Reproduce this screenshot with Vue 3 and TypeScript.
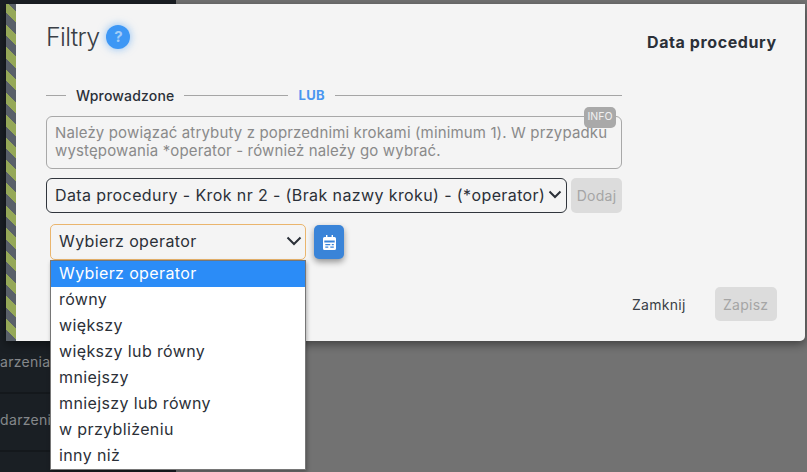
<script setup lang="ts">
const operators = [
  'Wybierz operator',
  'równy',
  'większy',
  'większy lub równy',
  'mniejszy',
  'mniejszy lub równy',
  'w przybliżeniu',
  'inny niż',
]
</script>

<template>
  <div class="page">
    <aside class="sidebar">
      <div class="side-row">Zdarzenia</div>
      <div class="side-row">Zdarzenia</div>
    </aside>
    <div class="backdrop" />

    <div class="modal">
      <div class="stripe" />
      <div class="modal-body">
        <div class="columns">
          <section class="main-col">
            <header class="title-row">
              <h1 class="title">Filtry</h1>
              <span class="help">?</span>
            </header>

            <div class="tabs">
              <span class="line short" />
              <span class="tab">Wprowadzone</span>
              <span class="line mid" />
              <span class="tab active">LUB</span>
              <span class="line" />
            </div>

            <div class="info-box">
              <span class="badge">INFO</span>
              Należy powiązać atrybuty z poprzednimi krokami (minimum 1). W przypadku<br />
              występowania *operator - również należy go wybrać.
            </div>

            <div class="attr-row">
              <div class="attr-select">
                <span>Data procedury - Krok nr 2 - (Brak nazwy kroku) - (*operator)</span>
                <svg class="chevron" width="14" height="9" viewBox="0 0 14 9" fill="none" aria-hidden="true">
                  <path d="M1.5 1.5L7 7l5.5-5.5" stroke="#2b3038" stroke-width="2" />
                </svg>
              </div>
              <button class="btn-disabled add">Dodaj</button>
            </div>

            <div class="operator-row">
              <div class="operator-wrap">
                <div class="operator-select">
                  <span>Wybierz operator</span>
                  <svg class="chevron" width="16" height="10" viewBox="0 0 16 10" fill="none" aria-hidden="true">
                    <path d="M1.5 1.5L8 8l6.5-6.5" stroke="#2b3038" stroke-width="2" />
                  </svg>
                </div>
                <ul class="options">
                  <li
                    v-for="(op, i) in operators"
                    :key="op"
                    class="option"
                    :class="{ selected: i === 0 }"
                  >
                    {{ op }}
                  </li>
                </ul>
              </div>
              <button class="calendar-btn" aria-label="Kalendarz">
                <svg width="13" height="15" viewBox="0 0 13 15" aria-hidden="true">
                  <path
                    fill="#fff"
                    fill-rule="evenodd"
                    d="M3 0h1.4v2h4.2V0H10v2h1.5A1.5 1.5 0 0 1 13 3.5v10a1.5 1.5 0 0 1-1.5 1.500h-10A1.5 1.5 0 0 1 0 13.500v-10A1.500 1.500 0 0 1 1.500 2H3V0ZM1.300 5.500v2h10.400v-2H1.300Zm1 3.500v1.200h5V9h-5Zm6.500 0v1.200h2V9h-2Zm-6.500 2.500v1.200h3v-1.200h-3Zm5 0v1.200h3.500v-1.200H7.300Z"
                  />
                </svg>
              </button>
            </div>
          </section>

          <section class="side-col">
            <h2 class="side-title">Data procedury</h2>
          </section>
        </div>

        <footer class="footer">
          <button class="btn-close">Zamknij</button>
          <button class="btn-disabled save">Zapisz</button>
        </footer>
      </div>
    </div>
  </div>
</template>

<style>
html,
body {
  margin: 0;
  overflow: hidden;
}
</style>

<style scoped>
.page {
  position: relative;
  display: flex;
  width: 807px;
  height: 472px;
  overflow: hidden;
  font-family: Inter, "Noto Sans", sans-serif;
  color: #2b3038;
}

.sidebar {
  width: 176px;
  background: #1a1f24;
  padding-top: 336px;
  box-sizing: border-box;
  overflow: hidden;
}

.side-row {
  height: 58px;
  margin-left: -9px;
  padding-top: 17px;
  box-sizing: border-box;
  font-size: 14px;
  letter-spacing: 0.3px;
  line-height: 18px;
  color: #85888b;
  border-bottom: 2px solid #14181c;
  white-space: nowrap;
}

.side-row:first-child {
  margin-left: -18px;
}

.backdrop {
  flex: 1;
  background: #727272;
}

/* modal lies over the page */
.modal {
  position: absolute;
  left: 6px;
  top: 4px;
  width: 799px;
  height: 337px;
  display: flex;
  background: #f4f4f4;
  border-radius: 0 0 5px 0;
  box-shadow: 0 3px 10px rgba(0, 0, 0, 0.45);
}

.stripe {
  width: 10px;
  flex-shrink: 0;
  background: repeating-linear-gradient(
    45deg,
    #596069 0 8px,
    #95a858 8px 16px
  );
}

.modal-body {
  flex: 1;
  display: flex;
  flex-direction: column;
  padding: 0 29px 20px 30px;
}

.columns {
  display: flex;
  gap: 25px;
}

.main-col {
  width: 576px;
}

.title-row {
  display: flex;
  align-items: center;
  gap: 7px;
  height: 24px;
  margin-top: 21px;
}

.title {
  margin: 0;
  font-size: 25px;
  font-weight: 300;
  line-height: 24px;
  letter-spacing: -0.7px;
  color: #3a3f46;
}

.help {
  width: 24px;
  height: 24px;
  border-radius: 50%;
  background: #3d97f5;
  box-shadow: 0 0 8px rgba(61, 151, 245, 0.6);
  color: #a3cdf7;
  font-size: 15px;
  font-weight: 700;
  line-height: 24px;
  text-align: center;
}

.tabs {
  display: flex;
  align-items: center;
  gap: 10px;
  height: 18px;
  margin-top: 37px;
}

.line {
  flex: 1;
  height: 1px;
  background: #a5a5a5;
}

.line.short {
  flex: 0 0 20px;
}

.line.mid {
  flex: 0 0 104px;
}

.tab {
  font-size: 14px;
  font-weight: 500;
  letter-spacing: 0.18px;
}

.tab.active {
  font-size: 13px;
  color: #4a96f0;
  font-weight: 700;
  letter-spacing: 0.35px;
}

.info-box {
  position: relative;
  height: 53px;
  margin-top: 12px;
  padding: 7px 8px;
  box-sizing: border-box;
  border: 1px solid #a8a8a8;
  border-radius: 6px;
  font-size: 15px;
  line-height: 18px;
  letter-spacing: 0.14px;
  color: #8a8a8a;
  white-space: nowrap;
}

.badge {
  position: absolute;
  right: 5px;
  top: -10px;
  width: 32px;
  height: 21px;
  border-radius: 5px;
  background: #a9a9a9;
  color: #f1f1f1;
  font-size: 10.5px;
  line-height: 19px;
  letter-spacing: 0;
  text-align: center;
}

.attr-row {
  display: flex;
  gap: 4px;
  height: 35px;
  margin-top: 9px;
}

.attr-select {
  flex: 1;
  display: flex;
  align-items: center;
  justify-content: space-between;
  padding: 0 4px 2px 8px;
  border: 1px solid #30353c;
  border-radius: 6px;
  font-size: 16px;
  letter-spacing: 0.39px;
  white-space: nowrap;
}

.btn-disabled {
  border: 0;
  border-radius: 5px;
  background: #dcdcdc;
  color: #a5a5a5;
  font-family: inherit;
  font-size: 14px;
  letter-spacing: 0.25px;
  padding: 0;
}

.add {
  width: 51px;
}

.operator-row {
  display: flex;
  align-items: flex-start;
  gap: 8px;
  margin: 11px 0 0 4px;
}

.operator-wrap {
  position: relative;
  width: 256px;
}

.operator-select {
  display: flex;
  align-items: center;
  justify-content: space-between;
  height: 36px;
  padding: 0 3px 2px 8px;
  box-sizing: border-box;
  border: 1px solid #eab56d;
  border-radius: 5px;
  font-size: 16px;
  letter-spacing: 0.37px;
}

/* open native-like list drops over the rest of the page */
.options {
  position: absolute;
  top: 36px;
  left: 0;
  z-index: 2;
  width: 100%;
  margin: 0;
  padding: 0;
  box-sizing: border-box;
  list-style: none;
  background: #fff;
  border: 1px solid #767676;
  box-shadow: 1px 2px 4px rgba(0, 0, 0, 0.3);
}

.option {
  height: 26px;
  padding-left: 8px;
  font-size: 16px;
  line-height: 24px;
  letter-spacing: 0.37px;
}

.option.selected {
  background: #2b8cf7;
  color: #fff;
}

.calendar-btn {
  display: flex;
  align-items: center;
  justify-content: center;
  width: 30px;
  height: 34px;
  margin-top: 1px;
  padding: 0;
  border: 0;
  border-radius: 5px;
  background: #3a84d8;
  box-shadow: 0 3px 6px rgba(0, 0, 0, 0.4);
}

.side-col {
  flex: 1;
  padding-top: 26px;
}

.side-title {
  margin: 0;
  font-size: 16px;
  font-weight: 700;
  line-height: 24px;
  letter-spacing: 0.6px;
  white-space: nowrap;
  text-align: right;
}

.footer {
  display: flex;
  align-items: center;
  justify-content: flex-end;
  gap: 29px;
  margin-top: auto;
}

.btn-close {
  border: 0;
  background: none;
  padding: 0;
  font-family: inherit;
  font-size: 14px;
  font-weight: 400;
  letter-spacing: 0.3px;
  color: #3a3f46;
}

.save {
  width: 62px;
  height: 34px;
}
</style>
